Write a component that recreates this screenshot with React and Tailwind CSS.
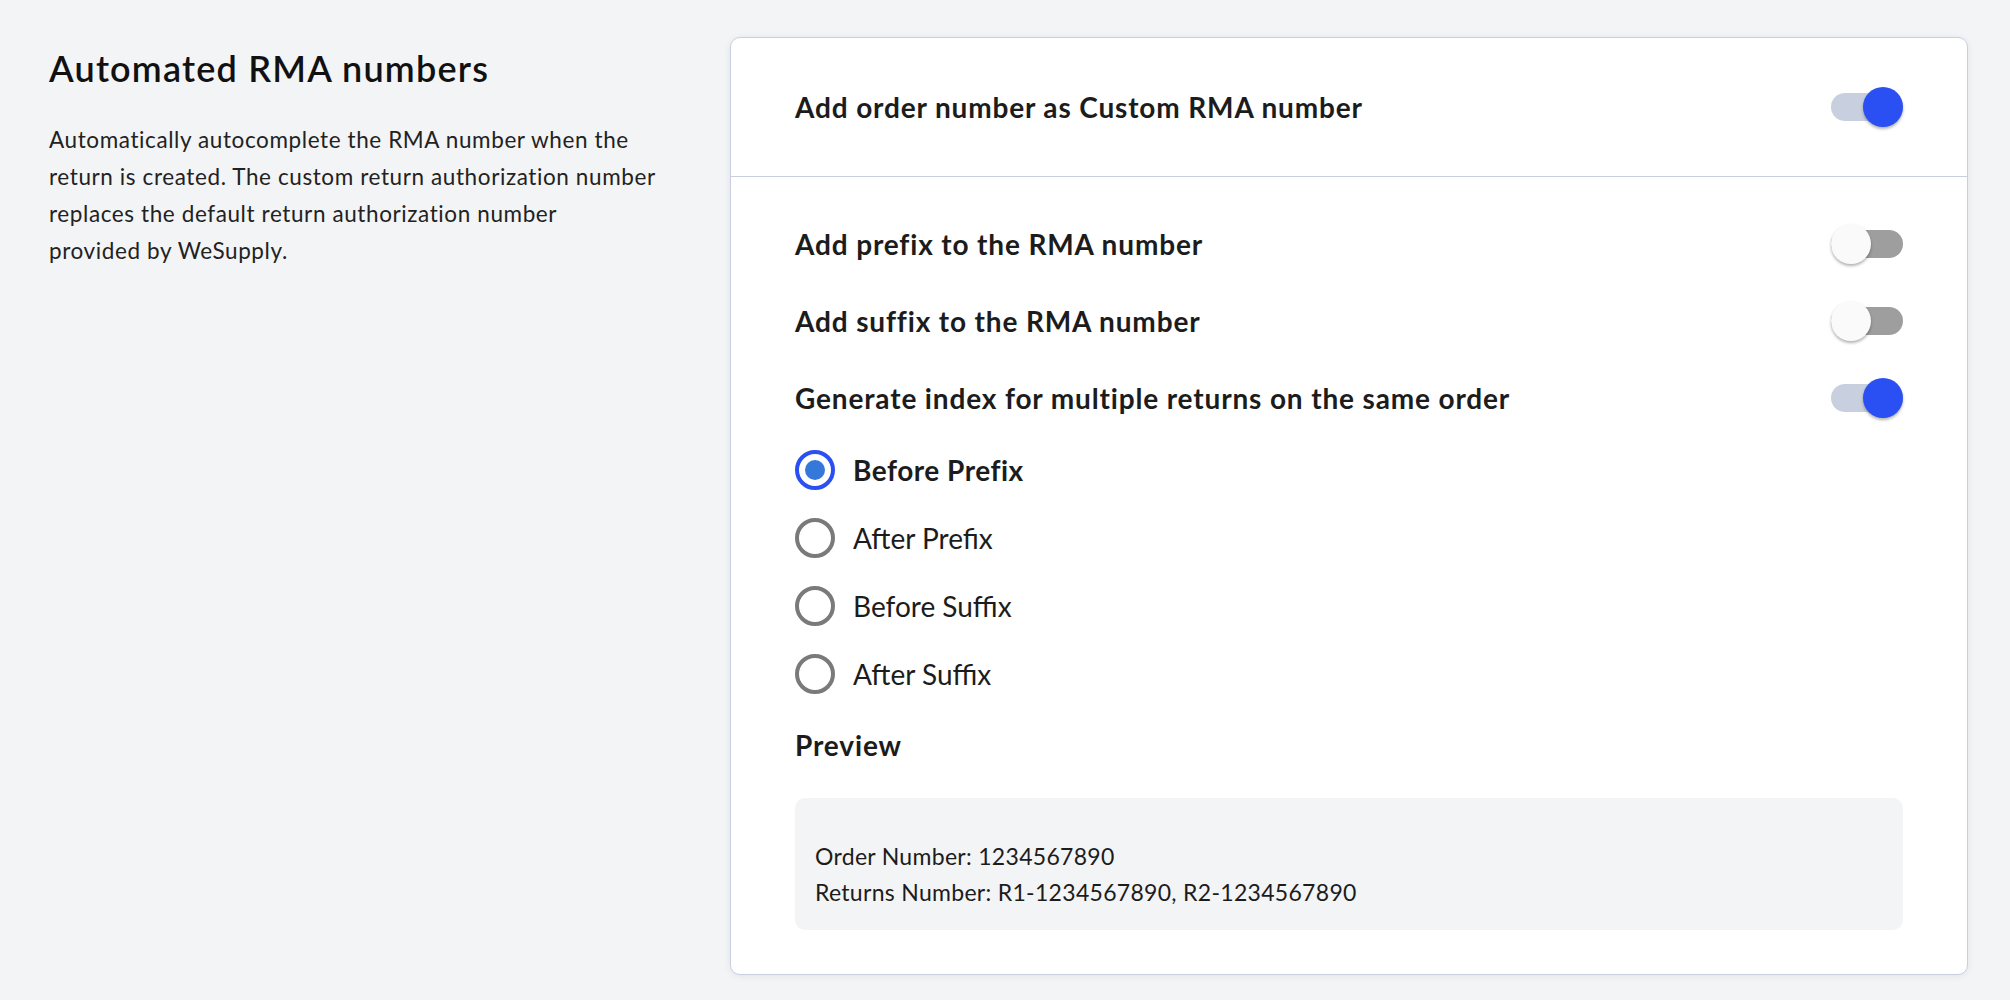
import React, { useState } from "react";

function Toggle({ on }) {
  return (
    <div
      className={
        "relative h-[28px] w-[72px] shrink-0 rounded-full " +
        (on ? "bg-[#c8d0e0]" : "bg-[#9e9e9e]")
      }
    >
      <div
        className={
          "absolute top-[-6px] h-[40px] w-[40px] rounded-full shadow-[0_2px_3px_rgba(0,0,0,0.3)] " +
          (on ? "left-[32px] bg-[#2a4ff2]" : "left-0 bg-[#fafafa]")
        }
      />
    </div>
  );
}

function ToggleRow({ label, on }) {
  return (
    <div className="flex h-[77px] items-center justify-between">
      <span className="text-[28px] font-bold tracking-[0.85px]">{label}</span>
      <Toggle on={on} />
    </div>
  );
}

function Radio({ label, checked }) {
  return (
    <div className="flex h-[68px] items-center gap-[18px]">
      <div
        className={
          "flex h-[40px] w-[40px] items-center justify-center rounded-full border-[4px] " +
          (checked ? "border-[#2a4ff2]" : "border-[#7a7a7a]")
        }
      >
        {checked && <div className="h-[20px] w-[20px] rounded-full bg-[#3479d9]" />}
      </div>
      <span
        className={
          "text-[28px] " + (checked ? "font-bold tracking-[0.5px]" : "font-normal tracking-[0px]")
        }
      >
        {label}
      </span>
    </div>
  );
}

export default function App() {
  const [options] = useState(["Before Prefix", "After Prefix", "Before Suffix", "After Suffix"]);
  return (
    <div className="min-h-screen bg-[#f3f4f6] font-['Lato',sans-serif] text-[#1c1c1c]">
      <div className="flex gap-[21px] pl-[49px] pr-[42px] pt-[37px]">
        <div className="w-[660px] shrink-0 pt-[7px]">
          <h2 className="text-[36px] font-semibold leading-[48px] tracking-[1.2px] text-[#111]">
            Automated RMA numbers
          </h2>
          <p className="mt-[29px] text-[22.5px] leading-[37px] tracking-[0.6px] text-[#222]">
            Automatically autocomplete the RMA number when the
            <br />
            return is created. The custom return authorization number
            <br />
            replaces the default return authorization number
            <br />
            provided by WeSupply.
          </p>
        </div>
        <div className="flex-1 rounded-[10px] border border-[#c8d0e0] bg-white shadow-[0_1px_6px_rgba(100,110,140,0.12)]">
          <div className="flex h-[139px] items-center justify-between border-b border-[#c8d0e0] px-[64px]">
            <span className="text-[28px] font-bold tracking-[0.85px]">Add order number as Custom RMA number</span>
            <Toggle on />
          </div>
          <div className="px-[64px] pb-[44px] pt-[28px]">
            <ToggleRow label="Add prefix to the RMA number" on={false} />
            <ToggleRow label="Add suffix to the RMA number" on={false} />
            <ToggleRow label="Generate index for multiple returns on the same order" on />
            {options.map((o, i) => (
              <Radio key={o} label={o} checked={i === 0} />
            ))}
            <div className="flex h-[74px] items-center">
              <span className="text-[28px] font-bold tracking-[0.85px]">Preview</span>
            </div>
            <div className="mt-[16px] rounded-[10px] bg-[#f3f4f6] pb-[20px] pl-[20px] pt-[40px] text-[23px] leading-[36px] tracking-[0.3px] text-[#1c1c1c]">
              <div>Order Number: 1234567890</div>
              <div>Returns Number: R1-1234567890, R2-1234567890</div>
            </div>
          </div>
        </div>
      </div>
    </div>
  );
}
